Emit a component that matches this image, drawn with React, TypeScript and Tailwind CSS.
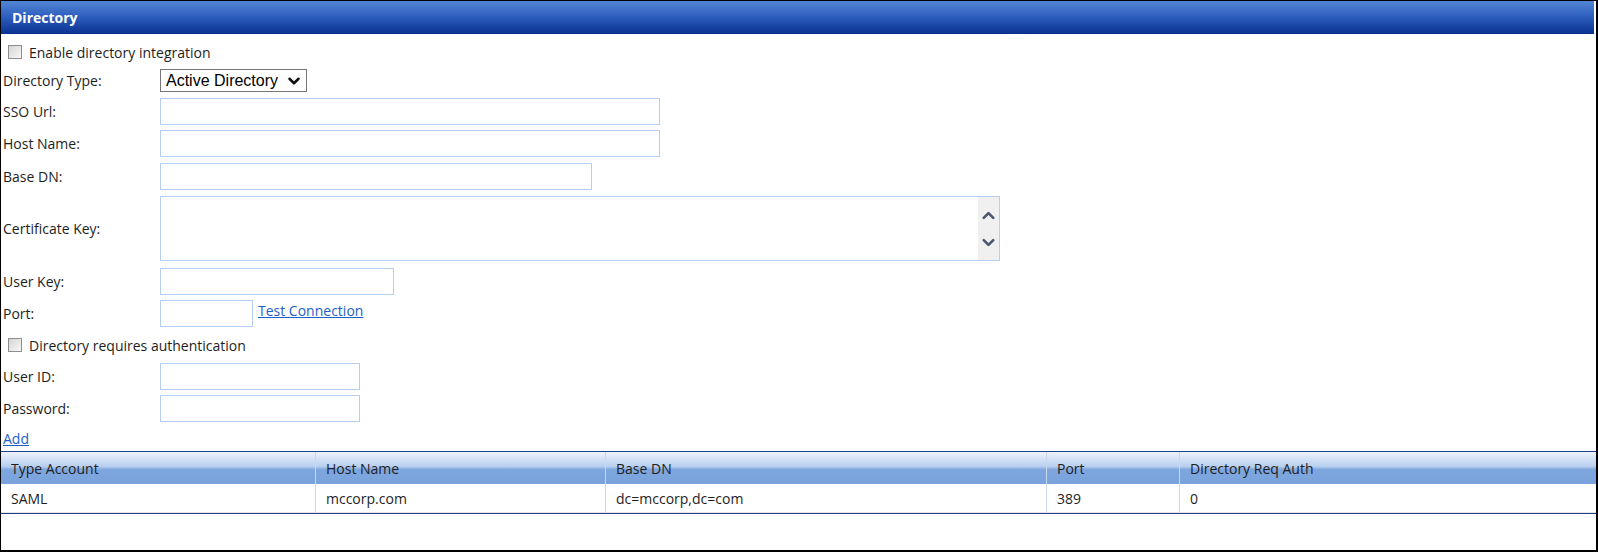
import { ChevronDown, ChevronUp } from "lucide-react";

const font = "font-['Open_Sans',_'Noto_Sans',sans-serif]";

function Check({ label, className }: { label: string; className: string }) {
  return (
    <div className={`flex items-center h-[20px] ${className}`}>
      <span className="ml-[7px] w-[14px] h-[14px] border border-[#8e8e8e] bg-[linear-gradient(135deg,#d6d6d6,#f7f7f7)]" />
      <span className="ml-[7px] text-[14px] text-[#1e1e1e]">{label}</span>
    </div>
  );
}

function Field({
  label,
  width,
  className,
  children,
}: {
  label: string;
  width: string;
  className: string;
  children?: React.ReactNode;
}) {
  return (
    <div className={`flex items-center ${className}`}>
      <span className="w-[159px] pl-[2px] text-[14px] text-[#1e1e1e]">{label}</span>
      <div className={`h-[27px] border border-[#b4cff5] bg-white ${width}`} />
      {children}
    </div>
  );
}

const cols = ["Type Account", "Host Name", "Base DN", "Port", "Directory Req Auth"];
const row = ["SAML", "mccorp.com", "dc=mccorp,dc=com", "389", "0"];

export default function App() {
  return (
    <div
      className={`w-[1598px] h-[552px] bg-white border-l border-t border-b-2 border-r-2 border-black flex flex-col overflow-hidden ${font}`}
    >
      <div className="h-[33px] mr-[2px] flex items-center pl-[11px] bg-[linear-gradient(to_bottom,#5385d4,#2c5cbd_50%,#0a318f)]">
        <span className="text-white font-bold text-[14px]">Directory</span>
      </div>

      <Check label="Enable directory integration" className="mt-[8px]" />

      <div className="flex items-center mt-[7px]">
        <span className="w-[159px] pl-[2px] text-[14px] text-[#1e1e1e]">Directory Type:</span>
        <div className="h-[23px] w-[147px] border border-[#767676] flex items-center justify-between pl-[5px] pr-[3px] font-['Liberation_Sans',Arial,sans-serif] text-[16px] text-black">
          <span>Active Directory</span>
          <ChevronDown size={18} strokeWidth={3.4} className="text-[#111]" />
        </div>
      </div>

      <Field label="SSO Url:" width="w-[500px]" className="mt-[6px]" />
      <Field label="Host Name:" width="w-[500px]" className="mt-[5px]" />
      <Field label="Base DN:" width="w-[432px]" className="mt-[6px]" />

      <div className="flex items-center mt-[6px]">
        <span className="w-[159px] pl-[2px] text-[14px] text-[#1e1e1e]">Certificate Key:</span>
        <div className="h-[65px] w-[840px] border border-[#b4cff5] flex justify-end">
          <div className="w-[21px] h-full bg-[#f0f0f0] flex flex-col items-center justify-center gap-[8px]">
            <ChevronUp size={19} strokeWidth={3.4} className="text-[#4b5870]" />
            <ChevronDown size={19} strokeWidth={3.4} className="text-[#4b5870]" />
          </div>
        </div>
      </div>

      <Field label="User Key:" width="w-[234px]" className="mt-[7px]" />
      <Field label="Port:" width="w-[93px]" className="mt-[5px]">
        <a className="ml-[5px] -mt-[6px] text-[14px] text-[#1b5fc7] underline">Test Connection</a>
      </Field>

      <Check label="Directory requires authentication" className="mt-[8px]" />

      <Field label="User ID:" width="w-[200px]" className="mt-[8px]" />
      <Field label="Password:" width="w-[200px]" className="mt-[5px]" />

      <a className="mt-[8px] ml-[2px] w-fit text-[14px] leading-[18px] text-[#1b5fc7] underline">Add</a>

      <div className="mt-[3px] border-t border-[#1e3f8e]">
        <div className="grid grid-cols-[315px_290px_441px_133px_1fr] h-[32px] bg-[linear-gradient(to_bottom,#eef3fb,#b8cfef_45%,#7ea6de_55%,#7aa2dc)]">
          {cols.map((c, i) => (
            <div
              key={c}
              className={`flex items-center pl-[10px] text-[14px] text-[#1e1e1e] ${i < 4 ? "border-r border-[#c8d8ee]" : ""}`}
            >
              {c}
            </div>
          ))}
        </div>
        <div className="grid grid-cols-[315px_290px_441px_133px_1fr] h-[30px] border-b border-[#1e3f8e]">
          {row.map((c, i) => (
            <div
              key={i}
              className={`flex items-center pl-[10px] text-[14px] text-[#1e1e1e] border-b border-[#e4e4e4] ${i < 4 ? "border-r border-r-[#c8d8ee]" : ""}`}
            >
              {c}
            </div>
          ))}
        </div>
      </div>
    </div>
  );
}
